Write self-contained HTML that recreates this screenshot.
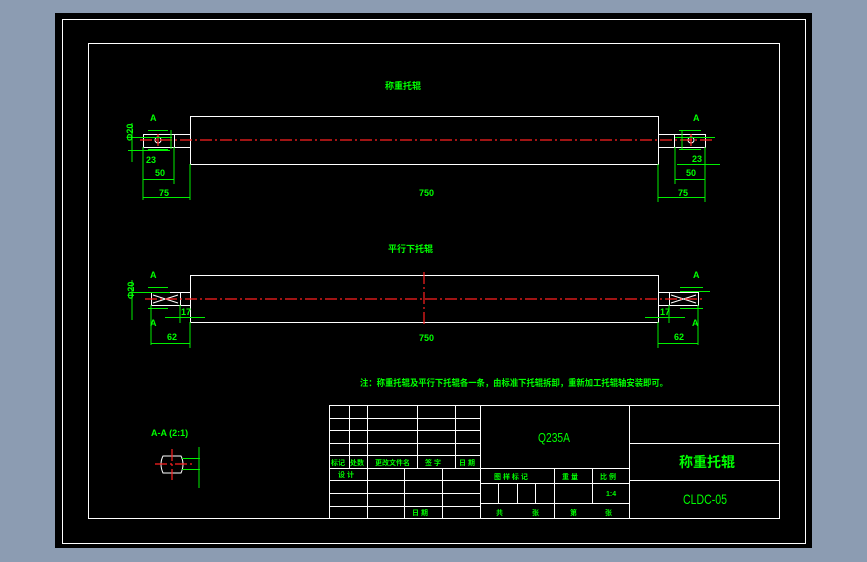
<!DOCTYPE html>
<html><head><meta charset="utf-8"><style>
html,body{margin:0;padding:0;background:#8c9cb2;}
svg{display:block;}
text{font-family:"Liberation Sans","Noto Sans CJK SC",sans-serif;fill:#00ff00;}
</style></head><body>
<svg width="867" height="562" viewBox="0 0 867 562" xmlns="http://www.w3.org/2000/svg">
<rect x="0" y="0" width="867" height="562" fill="#8c9cb2"/>
<rect x="55" y="13" width="757" height="535" fill="#000"/>
<g fill="none" stroke="#fff" stroke-width="1">
<rect x="62.5" y="19.5" width="743" height="524"/>
<rect x="88.5" y="43.5" width="691" height="475"/>
<rect x="190.5" y="116.5" width="468" height="48"/>
<rect x="143.5" y="134.5" width="31" height="13"/>
<line x1="174" y1="134.5" x2="190" y2="134.5"/><line x1="174" y1="147.5" x2="190" y2="147.5"/>
<rect x="674.5" y="134.5" width="31" height="13"/>
<line x1="658" y1="134.5" x2="674" y2="134.5"/><line x1="658" y1="147.5" x2="674" y2="147.5"/>
<circle cx="158" cy="140" r="3"/><circle cx="691" cy="140" r="3"/>
<rect x="190.5" y="275.5" width="468" height="47"/>
<rect x="151.5" y="292.5" width="29" height="13"/>
<line x1="180" y1="292.5" x2="190" y2="292.5"/><line x1="180" y1="305.5" x2="190" y2="305.5"/>
<rect x="669.5" y="292.5" width="29" height="13"/>
<line x1="658" y1="292.5" x2="669" y2="292.5"/><line x1="658" y1="305.5" x2="669" y2="305.5"/>
<path d="M153 295 L178 303 M153 303 L178 295 M671 295 L696 303 M671 303 L696 295"/>
<path d="M163 456 H181 Q185 464 181 473 H163 Q159 464 163 456 Z"/>
<rect x="329.5" y="405.5" width="450" height="113"/>
<path d="M329 418.5H480M329 430.5H480M329 443.5H480M329 455.5H480M329 468.5H629M329 480.5H480M329 493.5H480M329 506.5H480M480 483.5H629M480 503.5H629M629 443.5H779M629 480.5H779"/>
<path d="M349.5 405V468M367.5 405V518M417.5 405V468M455.5 405V468M480.5 405V518M404.5 468V518M442.5 468V518M629.5 405V518M498.5 483V503M517.5 483V503M535.5 483V503M554.5 468V518M592.5 468V503"/>
</g>
<g stroke="#ff2020" stroke-width="1.2" stroke-dasharray="12,3,2,3" fill="none">
<line x1="140" y1="140" x2="712" y2="140"/>
<line x1="145" y1="299" x2="705" y2="299"/>
<line x1="424" y1="272" x2="424" y2="325"/>
<line x1="158" y1="134" x2="158" y2="146"/><line x1="691" y1="134" x2="691" y2="146"/>
<line x1="155" y1="464" x2="192" y2="464"/>
<line x1="172" y1="449" x2="172" y2="480"/>
</g>
<g stroke="#00ee00" stroke-width="1" fill="none">
<path d="M132 137.5H172M148 130.5H168M148 149.5H168M171 130V149M132 123V162M128 150.5H170M143 147V200M174 147V184M143 179.5H174M143 197.5H190M190 164V200"/>
<path d="M675 137.5H715M679 130.5H701M679 149.5H701M682 130V149M677 164.5H720M675 147V184M705 147V202M675 179.5H705M658 164V202M658 197.5H705"/>
<path d="M132 292.5H170M148 287.5H168M148 308.5H168M132 280V320M151 305V345M180 305V323M165 317.5H205M151 343.5H190M190 322V348"/>
<path d="M680 291.5H710M680 287.5H703M680 308.5H703M698 305V345M669 305V323M645 317.5H685M658 322V348M658 343.5H698"/>
<path d="M182 458.5H200M182 469.5H200M199 447V488"/>
</g>
<g font-size="9" font-weight="bold">
<text x="385" y="89">称重托辊</text>
<text x="388" y="252">平行下托辊</text>
<text x="150" y="121">A</text><text x="693" y="121">A</text>
<text x="150" y="278">A</text><text x="693" y="278">A</text>
<text x="150" y="326">A</text><text x="692" y="326">A</text>
<text x="146" y="163">23</text><text x="155" y="176">50</text><text x="159" y="196">75</text>
<text x="419" y="196">750</text><text x="419" y="341">750</text>
<text x="692" y="162">23</text><text x="686" y="176">50</text><text x="678" y="196">75</text>
<text x="167" y="340">62</text><text x="674" y="340">62</text>
<text x="181" y="315">17</text><text x="660" y="315">17</text>
<text x="128" y="146" transform="rotate(-90 128 141)">Φ20</text>
<text x="128" y="305" transform="rotate(-90 128 299)">Φ20</text>
<text x="360" y="386" textLength="308" lengthAdjust="spacingAndGlyphs">注：称重托辊及平行下托辊各一条，由标准下托辊拆卸，重新加工托辊轴安装即可。</text>
<text x="151" y="436">A-A  (2:1)</text>
</g>
<g font-size="7" font-weight="bold">
<text x="331" y="465">标记</text><text x="350" y="465">处数</text><text x="375" y="465">更改文件名</text><text x="425" y="465">签 字</text><text x="459" y="465">日 期</text>
<text x="338" y="477">设 计</text><text x="412" y="515">日 期</text>
<text x="494" y="479">图 样 标 记</text><text x="562" y="479">重 量</text><text x="600" y="479">比 例</text>
<text x="606" y="496">1:4</text>
<text x="496" y="515">共</text><text x="532" y="515">张</text><text x="570" y="515">第</text><text x="605" y="515">张</text>
</g>
<text x="538" y="442" font-size="13" textLength="32" lengthAdjust="spacingAndGlyphs">Q235A</text>
<text x="679" y="467" font-size="14" font-weight="bold">称重托辊</text>
<text x="683" y="504" font-size="14" textLength="44" lengthAdjust="spacingAndGlyphs">CLDC-05</text>
</svg>
</body></html>
